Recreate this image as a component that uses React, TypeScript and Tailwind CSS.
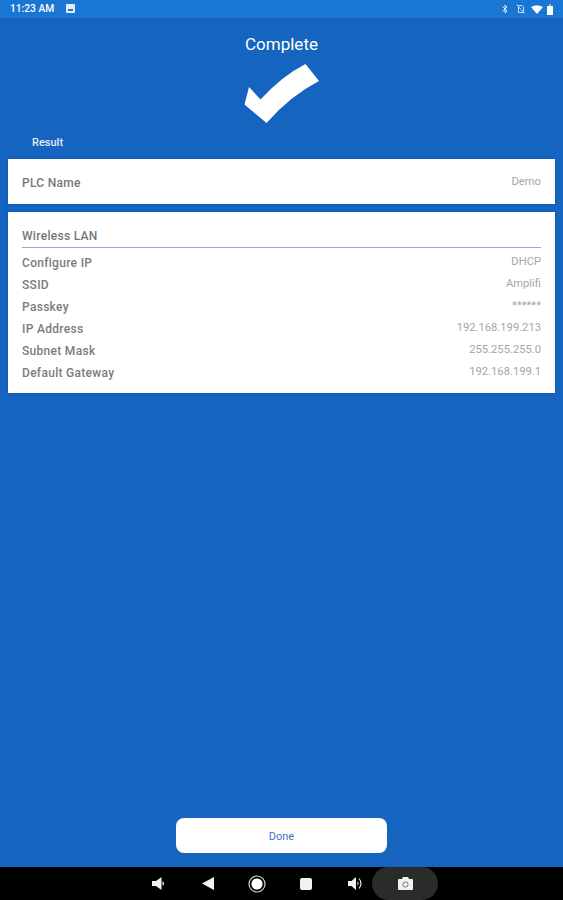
import React from 'react';

const font = { fontFamily: 'Roboto, "Noto Sans", sans-serif' };

// rows of the Wireless LAN card
const wifiRows = [
  ['Configure IP', 'DHCP'],
  ['SSID', 'Amplifi'],
  ['Passkey', '******'],
  ['IP Address', '192.168.199.213'],
  ['Subnet Mask', '255.255.255.0'],
  ['Default Gateway', '192.168.199.1'],
];

const StatusBar: React.FC = () => (
  <div className="h-[18px] shrink-0 bg-[#1976d2] flex items-center justify-between pl-[10px] pr-[10px]">
    <div className="flex items-center gap-[12px]">
      <span className="text-[10.2px] font-medium text-white leading-none">11:23 AM</span>
      <svg width="9" height="9" viewBox="0 0 9 9">
        <rect width="9" height="9" rx="1" fill="#e3edf9" />
        <rect x="2" y="5" width="5" height="2" fill="#1976d2" />
      </svg>
    </div>
    <div className="flex items-center">
      <svg width="6" height="10" viewBox="0 0 6 10" fill="none" stroke="#dbe8f8" strokeWidth="1">
        <path d="M0.5 2.5 L5 7 L3 9 V1 L5 3 L0.5 7.5" />
      </svg>
      <svg width="9" height="10" viewBox="0 0 9 10" fill="none" stroke="#c8dcf4" strokeWidth="1" className="ml-[8px]">
        <path d="M2.5 1.5 H6 L7.5 3 V8.5 H2.5 Z" />
        <path d="M0.5 0.5 L8.5 9.5" />
      </svg>
      <svg width="12" height="9" viewBox="0 0 12 9" className="ml-[6px]">
        <path d="M0 2 Q6 -1.5 12 2 L6 9 Z" fill="#ffffff" />
      </svg>
      <svg width="6" height="11" viewBox="0 0 6 11" className="ml-[4px]">
        <rect x="0" y="2" width="6" height="9" rx="0.5" fill="#ffffff" />
        <rect x="2" y="0" width="2" height="2" fill="#8fb9e8" />
      </svg>
    </div>
  </div>
);

const NavBar: React.FC = () => (
  <div className="h-[33px] shrink-0 bg-black flex items-center pl-[152px]">
    <div className="w-[50px] flex">
      <svg width="14" height="13" viewBox="0 0 14 13" fill="#f2f2f2">
        <path d="M0 4 H4 L9.5 0 V13 L4 9 H0 Z" />
        <path d="M10.5 4 Q13.5 6.5 10.5 9 Z" />
      </svg>
    </div>
    <div className="w-[46px] flex">
      <svg width="12" height="13" viewBox="0 0 12 13" fill="#f2f2f2">
        <path d="M12 0 V13 L0 6.5 Z" />
      </svg>
    </div>
    <div className="w-[52px] flex">
      <svg width="18" height="18" viewBox="0 0 18 18">
        <circle cx="9" cy="9" r="8" fill="none" stroke="#d0d0d0" strokeWidth="1.2" />
        <circle cx="9" cy="9" r="5.6" fill="#ffffff" />
      </svg>
    </div>
    <div className="w-[48px] flex">
      <div className="w-[12px] h-[12px] rounded-[2px] bg-[#f2f2f2]" />
    </div>
    <div className="w-[24px] flex">
      <svg width="15" height="13" viewBox="0 0 15 13" fill="#f2f2f2">
        <path d="M0 4 H3.5 L8 0 V13 L3.5 9 H0 Z" />
        <path d="M9.5 4 Q11.5 6.5 9.5 9 Z" />
        <path d="M11 1.5 Q15 6.5 11 11.5" fill="none" stroke="#f2f2f2" strokeWidth="1.1" />
      </svg>
    </div>
    {/* screenshot pill sits right after the volume icon */}
    <div className="w-[66px] h-[33px] rounded-[17px] bg-[#2b2b2b] flex items-center justify-center">
      <svg width="15" height="13" viewBox="0 0 15 13">
        <path d="M0 3 Q0 2 1 2 H4 L5 0 H10 L11 2 H14 Q15 2 15 3 V12 Q15 13 14 13 H1 Q0 13 0 12 Z" fill="#f2f2f2" />
        <circle cx="7.5" cy="7.5" r="2.6" fill="none" stroke="#777777" strokeWidth="1" />
      </svg>
    </div>
  </div>
);

const App: React.FC = () => {
  return (
    <div className="w-[563px] h-[900px] flex flex-col overflow-hidden bg-[#1565c0]" style={font}>
      <StatusBar />

      <main className="flex-1 flex flex-col">
        <h1 className="mt-[15px] text-center text-[17px] leading-[22px] text-white">Complete</h1>

        <div className="mt-[9px] flex justify-center">
          <svg width="76" height="60" viewBox="0 0 76 60" className="ml-[1px]">
            <path
              d="M5 23 L16.5 35.5 Q38 12 61.5 0 L75 17 Q46 32 22.5 59 L0.5 40.5 Z"
              fill="#ffffff"
            />
          </svg>
        </div>

        <div className="mt-[12px] pl-[32px] text-[11px] leading-[14px] font-medium text-[#e3edf9]">Result</div>

        <section className="mx-[8px] mt-[9px] h-[45px] bg-white shadow-[0_0_2px_#0d47a1] flex items-center justify-between px-[14px]">
          <span className="pt-[2px] text-[12px] font-medium tracking-[0.3px] text-[#777777]">PLC Name</span>
          <span className="pt-[2px] text-[11.2px] text-[#a6a6a6]">Demo</span>
        </section>

        <section className="mx-[8px] mt-[8px] h-[181px] bg-white shadow-[0_0_2px_#0d47a1] px-[14px] pt-[16px]">
          <div className="h-[20px] border-b border-[#8fa9dc] text-[12px] leading-[17px] font-medium tracking-[0.3px] text-[#777777]">
            Wireless LAN
          </div>
          <div className="mt-[4px]">
            {wifiRows.map(([label, value]) => (
              <div key={label} className="h-[22px] flex items-center justify-between">
                <span className="text-[12px] font-medium tracking-[0.3px] text-[#7c7c7c]">{label}</span>
                <span className="text-[11.2px] text-[#a6a6a6] -mt-[2px]">{value}</span>
              </div>
            ))}
          </div>
        </section>

        <div className="mt-auto mb-[14px] flex justify-center">
          <button className="w-[211px] h-[35px] pt-[3px] rounded-[8px] bg-white text-[11px] text-[#3f74c4]">
            Done
          </button>
        </div>
      </main>

      <NavBar />
    </div>
  );
};

export default App;
